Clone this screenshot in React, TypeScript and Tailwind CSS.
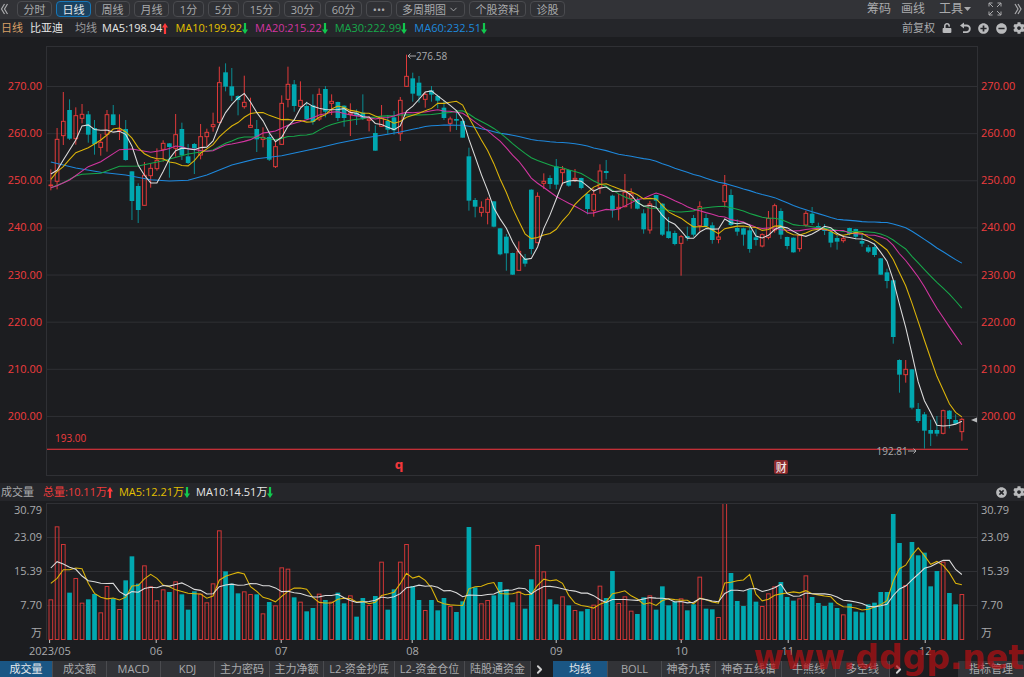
import { useState, type ReactNode } from 'react';
import { FaCog, FaMinusCircle, FaPlusCircle, FaTimesCircle, FaUnlock } from 'react-icons/fa';
import { ChevronDown, ChevronRight } from 'lucide-react';
import clsx from 'clsx';

// [high, open, close, low, volume], chart units, y grows downwards
type Bar = [number, number, number, number, number];

const bars: Bar[] = [
  // May
  [388, 437, 435, 451, 122], [264, 424, 298, 448, 341], [156, 287, 244, 315, 288], [178, 210, 296, 300, 142],
  [202, 296, 227, 314, 186], [192, 235, 223, 250, 112], [213, 223, 284, 308, 122], [240, 264, 312, 344, 138],
  [282, 322, 307, 347, 83], [210, 283, 224, 335, 162], [195, 223, 255, 256, 125], [223, 272, 270, 300, 93],
  [240, 267, 360, 362, 179], [394, 394, 483, 540, 251], [430, 438, 510, 549, 169], [366, 496, 406, 497, 224],
  [372, 407, 385, 443, 161],
  // June
  [325, 386, 361, 392, 119], [301, 328, 310, 365, 152], [309, 310, 321, 413, 144], [222, 325, 284, 350, 176],
  [248, 267, 346, 360, 137], [312, 349, 369, 372, 91], [309, 312, 325, 402, 146], [252, 345, 290, 358, 139],
  [266, 290, 277, 318, 113], [218, 260, 254, 275, 170], [80, 247, 128, 250, 329], [70, 97, 140, 154, 206],
  [84, 139, 167, 183, 169], [166, 168, 180, 226, 140], [107, 200, 187, 206, 146], [173, 262, 256, 263, 138],
  [240, 267, 298, 336, 137], [262, 298, 292, 322, 80], [280, 291, 359, 363, 114], [304, 380, 320, 384, 104],
  // July
  [166, 313, 190, 315, 218], [80, 178, 133, 202, 214], [120, 133, 198, 215, 128], [124, 199, 181, 201, 115],
  [185, 198, 237, 240, 86], [163, 196, 246, 254, 96], [145, 237, 163, 243, 139], [138, 147, 215, 232, 120],
  [163, 190, 184, 225, 115], [185, 186, 234, 243, 142], [196, 197, 234, 260, 110], [190, 223, 219, 288, 134],
  [208, 218, 228, 255, 70], [163, 218, 236, 240, 126], [228, 241, 237, 274, 105], [256, 279, 332, 332, 132],
  [195, 259, 235, 261, 235], [225, 243, 269, 283, 91], [213, 232, 271, 284, 152], [171, 281, 181, 303, 235],
  [44, 139, 109, 141, 288],
  // August
  [98, 115, 161, 185, 162], [108, 128, 167, 188, 120], [158, 178, 163, 203, 90], [138, 151, 164, 185, 120],
  [164, 168, 182, 205, 89], [183, 203, 234, 240, 126], [230, 250, 237, 275, 102], [212, 237, 242, 270, 84],
  [240, 243, 293, 293, 116], [323, 349, 482, 512, 339], [474, 480, 500, 532, 158], [484, 517, 502, 530, 110],
  [472, 517, 478, 553, 120], [484, 484, 560, 562, 134], [564, 565, 643, 646, 174], [582, 590, 640, 692, 152],
  [638, 639, 704, 705, 113], [604, 691, 634, 692, 146], [642, 655, 671, 680, 94], [448, 449, 627, 643, 182],
  [457, 608, 469, 610, 285], [400, 430, 424, 447, 206], [406, 414, 432, 447, 122],
  // September
  [357, 379, 434, 448, 107], [378, 398, 388, 436, 131], [388, 390, 437, 440, 104], [387, 420, 415, 426, 90],
  [413, 414, 444, 448, 86], [460, 462, 507, 523, 93], [446, 511, 463, 530, 106], [373, 442, 393, 461, 163],
  [360, 393, 399, 418, 126], [464, 467, 511, 533, 207], [462, 506, 502, 541, 111], [402, 500, 457, 502, 131],
  [445, 475, 460, 506, 88], [472, 480, 506, 508, 78], [508, 520, 568, 581, 128], [483, 570, 492, 581, 134],
  [464, 465, 482, 502, 91], [490, 491, 584, 588, 161], [531, 574, 594, 596, 104], [572, 579, 612, 616, 116],
  // October
  [585, 610, 590, 707, 125], [560, 588, 594, 602, 89], [525, 534, 584, 590, 107], [484, 557, 500, 573, 190],
  [522, 534, 559, 566, 94], [547, 556, 600, 611, 92], [565, 598, 591, 610, 69], [405, 485, 436, 502, 411],
  [448, 465, 555, 558, 201], [538, 564, 575, 587, 117], [563, 565, 584, 617, 102], [560, 571, 627, 638, 152],
  [568, 592, 600, 617, 115], [580, 618, 584, 622, 102], [513, 592, 535, 598, 140], [491, 570, 497, 578, 161],
  [505, 513, 584, 597, 174],
  // November
  [590, 591, 618, 628, 129], [592, 593, 637, 638, 118], [582, 626, 586, 635, 125], [512, 555, 520, 560, 194],
  [501, 521, 549, 555, 129], [548, 558, 565, 568, 111], [552, 563, 573, 585, 102], [566, 575, 608, 622, 112],
  [586, 594, 605, 629, 96], [586, 602, 596, 608, 77], [563, 564, 582, 586, 109], [566, 567, 590, 598, 85],
  [582, 603, 611, 620, 83], [615, 622, 635, 639, 107], [610, 621, 645, 651, 112], [654, 655, 704, 705, 144],
  [686, 697, 723, 745, 144], [720, 721, 891, 911, 378], [958, 960, 1004, 1058, 291], [960, 1004, 988, 1028, 165],
  [987, 988, 1103, 1108, 294], [1089, 1107, 1143, 1149, 254],
  // December
  [1116, 1123, 1172, 1226, 262], [1139, 1170, 1181, 1218, 161], [1128, 1170, 1181, 1189, 207],
  [1109, 1180, 1112, 1183, 235], [1110, 1112, 1137, 1165, 141], [1123, 1140, 1151, 1152, 107],
  [1133, 1175, 1138, 1202, 138],
];

const UNITS = 2790;
const xAt = (i: number) => 11.5 + i * 18.72;

const closes = bars.map((b) => b[2]);
const volumes = bars.map((b) => b[4]);

/** Moving average; the first bars have no full window, so `lead` gives their points. */
function average(values: number[], size: number, lead: [number, number][]) {
  const points = lead.map(([i, v]) => [xAt(i), v]);
  for (let i = size - 1; i < values.length; i++) {
    const sum = values.slice(i - size + 1, i + 1).reduce((a, b) => a + b, 0);
    points.push([xAt(i), sum / size]);
  }
  return points;
}

const toPath = (points: number[][]) => points.map((p) => p.map((n) => n.toFixed(1)).join(',')).join(' ');

const priceLines = [
  {
    color: '#1e88dc',
    points: average(closes, 60, [
      [0, 366], [4, 384], [8, 397], [12, 405], [16, 419], [19, 423], [22, 421], [25, 405], [29, 375], [33, 356],
      [37, 347], [40, 335], [43, 323], [46, 310], [50, 295], [53, 286], [56, 276], [58, 268],
    ]),
  },
  {
    color: '#17a84a',
    points: average(closes, 30, [
      [0, 443], [2, 428], [4, 408], [5, 403], [8, 400], [11, 379], [14, 378], [18, 362], [22, 342], [26, 330], [28, 310],
    ]),
  },
  {
    color: '#d235a0',
    points: average(closes, 20, [
      [0, 443], [1, 437], [3, 420], [6, 380], [8, 365], [11, 329], [13, 327], [16, 337], [18, 331],
    ]),
  },
  {
    color: '#dcb40a',
    points: average(closes, 10, [
      [0, 418], [1, 395], [2, 380], [3, 358], [4, 338], [5, 331], [6, 323], [7, 312], [8, 300],
    ]),
  },
  { color: '#dcdcdc', points: average(closes, 5, [[0, 402], [1, 391], [2, 360], [3, 330]]) },
];

const volumeLines = [
  { color: '#dcb40a', points: average(volumes, 5, [[0, 170], [1, 185], [2, 211], [3, 211]]) },
  {
    color: '#dcdcdc',
    points: average(volumes, 10, [
      [0, 216], [1, 235], [2, 228], [3, 218], [4, 212], [5, 192], [6, 178], [7, 175], [8, 170],
    ]),
  },
].map((l) => ({ ...l, points: l.points.map(([x, y]) => [x, 411 - y]) }));

const months = [
  { i: 0, label: '2023/05' },
  { i: 17, label: '06' },
  { i: 37, label: '07' },
  { i: 58, label: '08' },
  { i: 81, label: '09' },
  { i: 101, label: '10' },
  { i: 118, label: '11' },
  { i: 140, label: '12' },
];

const periods = [
  { label: '分时', width: 'w-[35px]' },
  { label: '日线', width: 'w-[35px]' },
  { label: '周线', width: 'w-[35px]' },
  { label: '月线', width: 'w-[35px]' },
  { label: '1分', width: 'w-[31px]' },
  { label: '5分', width: 'w-[31px]' },
  { label: '15分', width: 'w-[37px]' },
  { label: '30分', width: 'w-[37px]' },
  { label: '60分', width: 'w-[37px]' },
  { label: '•••', width: 'w-[26px]' },
  { label: '多周期图', width: 'w-[69px]', menu: true },
  { label: '个股资料', width: 'w-[57px]' },
  { label: '诊股', width: 'w-[35px]' },
];

const indicators = [
  { label: '成交量', width: 'w-[53px]' },
  { label: '成交额', width: 'w-[54px]' },
  { label: 'MACD', width: 'w-[54px]' },
  { label: 'KDJ', width: 'w-[54px]' },
  { label: '主力密码', width: 'w-[55px]' },
  { label: '主力净额', width: 'w-[54px]' },
  { label: 'L2-资金抄底', width: 'w-[71px]' },
  { label: 'L2-资金仓位', width: 'w-[70px]' },
  { label: '陆股通资金', width: 'w-[66px]' },
];

const overlays = [
  { label: '均线', width: 'w-[55px]' },
  { label: 'BOLL', width: 'w-[54px]' },
  { label: '神奇九转', width: 'w-[54px]' },
  { label: '神奇五线谱', width: 'w-[66px]' },
  { label: '牛熊线', width: 'w-[54px]' },
  { label: '多空线', width: 'w-[54px]' },
];

const prices = ['270.00', '260.00', '250.00', '240.00', '230.00', '220.00', '210.00', '200.00'];

function Arrow({ up }: { up?: boolean }) {
  return (
    <svg viewBox="0 0 6 11" className={clsx('h-[11px] w-[6px]', up ? 'text-[#ff3b3b]' : 'rotate-180 text-[#12c84e]')}>
      <path d="M3 0 6 4.5H4.1V11H1.9V4.5H0Z" fill="currentColor" />
    </svg>
  );
}

function Reading({ text, color, up }: { text: string; color: string; up?: boolean }) {
  return (
    <span className={clsx('flex items-center', color)}>
      {text}
      <Arrow up={up} />
    </span>
  );
}

function IconButton({ label, children }: { label: string; children: ReactNode }) {
  return (
    <button type="button" aria-label={label} className="flex size-3 shrink-0 items-center justify-center text-[#b9babc]">
      {children}
    </button>
  );
}

function Toolbar() {
  const [active, setActive] = useState('日线');

  return (
    <header className="flex h-[19px] items-center bg-[#323337] pb-px text-[#a9aaac]">
      <button type="button" aria-label="向左" className="w-[17px] shrink-0">
        <svg viewBox="0 0 17 14" className="h-[14px] w-[17px]" fill="none" stroke="currentColor" strokeWidth="1.2">
          <path d="M4.5 2 1.5 7l3 5M7.500 2 4.500 7l3 5" />
        </svg>
      </button>
      <nav className="flex gap-1">
        {periods.map((p) => (
          <button
            key={p.label}
            type="button"
            onClick={() => setActive(p.label)}
            className={clsx(
              'flex h-4 shrink-0 items-center justify-center gap-[2px] rounded-sm border leading-none whitespace-nowrap',
              p.width,
              active === p.label
                ? 'border-[#1777b8] bg-[#1b4260] text-[#e4e8ec]'
                : 'border-[#4a4b4f] bg-[#303135]',
            )}
          >
            {p.label}
            {p.menu && <ChevronDown size={11} />}
          </button>
        ))}
      </nav>
      <div className="-mr-px ml-auto flex shrink-0 items-center text-[12px]">
        <button type="button">筹码</button>
        <button type="button" className="ml-[10px]">画线</button>
        <button type="button" className="ml-[14px] flex items-center gap-px">
          工具
          <svg viewBox="0 0 7 4" className="h-1 w-[7px]">
            <path d="M0 0h7L3.500 4Z" fill="currentColor" />
          </svg>
        </button>
        <button type="button" aria-label="全屏" className="ml-[17px]">
          <svg viewBox="0 0 14 14" className="size-[14px]" fill="none" stroke="currentColor">
            <path d="M1 4.500V1h3.500M1 1l4 4M9.500 1H13v3.500M13 1 9 5M1 9.500V13h3.500M1 13l4-4M13 9.500V13H9.500M13 13 9 9" />
          </svg>
        </button>
        <button type="button" aria-label="向右" className="ml-[9px]">
          <svg viewBox="0 0 14 14" className="size-[14px]" fill="none" stroke="currentColor" strokeWidth="1.2">
            <path d="m4 2 3 5-3 5M7 2l3 5-3 5" />
          </svg>
        </button>
      </div>
    </header>
  );
}

function AverageBar() {
  return (
    <div className="flex h-[18px] items-center overflow-hidden bg-[#25262a] pl-px">
      <span className="text-[#d9a066]">日线</span>
      <span className="ml-[7px] text-[#e6e6e6]">比亚迪</span>
      <span className="ml-3 text-[#9b9c9e]">均线</span>
      <div className="ml-[5px] flex gap-[7px]">
        <Reading text="MA5:198.94" color="text-[#e6e6e6]" up />
        <Reading text="MA10:199.92" color="text-[#e3c000]" />
        <Reading text="MA20:215.22" color="text-[#d235a0]" />
        <Reading text="MA30:222.99" color="text-[#17a84a]" />
        <Reading text="MA60:232.51" color="text-[#1e88dc]" />
      </div>
      <div className="-mr-px ml-auto flex shrink-0 items-center gap-[6px] text-[#a9aaac]">
        <span>前复权</span>
        <IconButton label="锁定"><FaUnlock size={10} /></IconButton>
        <IconButton label="撤销">
          <svg viewBox="0 0 12 12" className="size-3" fill="none" stroke="currentColor" strokeWidth="1.800">
            <path d="M3 3.500h4.500a3.200 3.200 0 0 1 0 6.700H4" />
            <path d="M5 .5V6.500L1 3.500Z" fill="currentColor" stroke="none" />
          </svg>
        </IconButton>
        <IconButton label="放大"><FaPlusCircle size={11} /></IconButton>
        <IconButton label="缩小"><FaMinusCircle size={11} /></IconButton>
        <IconButton label="设置"><FaCog size={12} /></IconButton>
      </div>
    </div>
  );
}

function PriceAxis({ side }: { side: 'left' | 'right' }) {
  return (
    <div
      className={clsx(
        'flex h-[394px] w-[46px] shrink-0 flex-col justify-around pt-4 text-[#f03c3e]',
        side === 'left' ? 'pr-1 text-right' : 'pl-[3px]',
      )}
    >
      {prices.map((p) => (
        <span key={p} className="leading-4">{p}</span>
      ))}
    </div>
  );
}

function PriceChart() {
  return (
    <section className="flex pt-[9px]">
      <PriceAxis side="left" />
      <div className="relative h-[430px] min-w-0 flex-1 border border-[#2f3034]">
        <svg viewBox={`0 21 ${UNITS} 1284`} preserveAspectRatio="none" className="size-full">
          {prices.map((p, i) => (
            <rect key={p} x="0" y={138 + i * 141.4} width={UNITS} height="3" fill="#2f3034" />
          ))}
          {bars.map(([high, open, close, low], i) => {
            const up = close < open;
            const x = xAt(i);
            if (!up) {
              return (
                <g key={i}>
                  <rect x={x - 1.5} y={high} width="3" height={low - high} fill="#0a8c92" />
                  <rect x={x - 7} y={open} width="14" height={close - open} fill="#00a8b0" />
                </g>
              );
            }
            return (
              <g key={i} fill="#e03a3a">
                <rect x={x - 1.5} y={high} width="3" height={Math.max(close - high, 0)} />
                <rect x={x - 1.5} y={open} width="3" height={Math.max(low - open, 0)} />
                <rect
                  x={x - 5.5}
                  y={close}
                  width="11"
                  height={Math.max(open - close, 1)}
                  fill="none"
                  stroke="#e03a3a"
                  strokeWidth="3"
                />
              </g>
            );
          })}
          {priceLines.map((l) => (
            <polyline key={l.color} points={toPath(l.points)} fill="none" stroke={l.color} strokeWidth="3.200" />
          ))}
          <rect x="0" y="1226" width="2763" height="4" fill="#c22f36" />
        </svg>

        <span className="absolute top-px left-[38.700%] flex items-center text-[10px] leading-4 text-[#a9aaac]">
          <svg viewBox="0 0 9 6" className="h-[6px] w-[9px]" fill="none" stroke="currentColor">
            <path d="M9 3H1M3.500.5 1 3l2.500 2.500" />
          </svg>
          276.58
        </span>
        <span className="absolute top-[396px] left-[89.200%] flex items-center text-[10px] leading-4 text-[#a9aaac]">
          192.81
          <svg viewBox="0 0 9 6" className="h-[6px] w-[9px]" fill="none" stroke="currentColor">
            <path d="M0 3h8M5.500.5 8 3 5.500 5.500" />
          </svg>
        </span>
        <span className="absolute top-[383px] left-2 text-[10px] leading-4 text-[#f03c3e]">193.00</span>
        <span className="absolute top-[410px] left-[37.400%] font-['DejaVu_Sans'] text-[12px] leading-4 font-bold text-[#f0383c]">q</span>
        <span className="absolute top-[413px] left-[78.200%] flex size-[14px] items-center justify-center rounded-xs bg-[#8a2a2c] text-[11px] leading-none font-medium text-[#f0e4e4]">
          财
        </span>
        <svg viewBox="0 0 6 6" className="absolute top-[370px] right-0 size-[6px]">
          <path d="M0 3 6 .5v5Z" fill="#b9babc" />
        </svg>
      </div>
      <PriceAxis side="right" />
    </section>
  );
}

function VolumeAxis({ side }: { side: 'left' | 'right' }) {
  return (
    <div
      className={clsx(
        '-mt-px flex h-[137px] w-[46px] shrink-0 flex-col leading-4 text-[#a9aaac]',
        side === 'left' ? 'pr-1 text-right' : 'pl-[3px]',
      )}
    >
      <span>30.79</span>
      <span className="mt-[11px]">23.09</span>
      <span className="mt-[18px]">15.39</span>
      <span className="mt-[18px]">7.70</span>
      <span className="mt-[12px]">万</span>
    </div>
  );
}

function VolumeChart() {
  return (
    <section className="mt-[7px]">
      <div className="flex h-[18px] items-center bg-[#25262a] pl-px">
        <span className="text-[#a9aaac]">成交量</span>
        <div className="ml-[9px] flex gap-[6px]">
          <Reading text="总量:10.11万" color="text-[#f03c3c]" up />
          <Reading text="MA5:12.21万" color="text-[#e3c000]" />
          <Reading text="MA10:14.51万" color="text-[#e6e6e6]" />
        </div>
        <div className="-mr-px ml-auto flex gap-[6px]">
          <IconButton label="关闭"><FaTimesCircle size={11} /></IconButton>
          <IconButton label="设置"><FaCog size={12} /></IconButton>
        </div>
      </div>
      <div className="flex pt-[2px]">
        <VolumeAxis side="left" />
        <div className="min-w-0 flex-1">
          <svg
            viewBox={`0 3 ${UNITS} 408`}
            preserveAspectRatio="none"
            className="h-[137px] w-full border border-b-0 border-[#2f3034]"
          >
            {[102, 204, 306].map((y) => (
              <rect key={y} x="0" y={y} width={UNITS} height="3" fill="#2f3034" />
            ))}
            {bars.map(([, open, close, , vol], i) =>
              close < open ? (
                <rect
                  key={i}
                  x={xAt(i) - 5.5}
                  y={412.5 - vol}
                  width="11"
                  height={vol - 3}
                  fill="none"
                  stroke="#cf3636"
                  strokeWidth="3"
                />
              ) : (
                <rect key={i} x={xAt(i) - 7} y={411 - vol} width="14" height={vol} fill="#00a8b0" />
              ),
            )}
            {volumeLines.map((l) => (
              <polyline key={l.color} points={toPath(l.points)} fill="none" stroke={l.color} strokeWidth="3.200" />
            ))}
          </svg>
          <div className="relative h-[21px] text-[#a9aaac]">
            {months.map((m) => (
              <span
                key={m.label}
                className="absolute top-0 flex -translate-x-1/2 flex-col items-center leading-4"
                style={{ left: `${(xAt(m.i) / UNITS) * 100}%` }}
              >
                <i className="h-[3px] w-px bg-[#c8c8c8]" />
                {m.label}
              </span>
            ))}
          </div>
        </div>
        <VolumeAxis side="right" />
      </div>
    </section>
  );
}

function Tabs({ items, initial }: { items: { label: string; width: string }[]; initial: string }) {
  const [active, setActive] = useState(initial);
  return (
    <div className="flex shrink-0">
      {items.map((t) => (
        <button
          key={t.label}
          type="button"
          onClick={() => setActive(t.label)}
          className={clsx(
            'h-4 border-r border-[#4a4b4f] leading-4 whitespace-nowrap',
            t.width,
            active === t.label ? 'bg-[#1a5684] text-[#e4e8ec]' : 'bg-[#323337]',
          )}
        >
          {t.label}
        </button>
      ))}
      <button type="button" aria-label="更多" className="flex w-4 items-center justify-center text-[#d0d0d0]">
        <ChevronRight size={13} strokeWidth={3.5} />
      </button>
    </div>
  );
}

export default function App() {
  return (
    <main className="relative flex min-h-screen flex-col overflow-hidden bg-[#1c1d20] font-['Open_Sans','Noto_Sans_CJK_SC',sans-serif] text-[11px]">
      <Toolbar />
      <AverageBar />
      <PriceChart />
      <VolumeChart />
      <footer className="flex h-4 text-[#a9aaac]">
        <Tabs items={indicators} initial="成交量" />
        <div className="ml-[6px]">
          <Tabs items={overlays} initial="均线" />
        </div>
        <button type="button" className="ml-auto w-[66px] shrink-0 bg-[#323337] leading-4">指标管理</button>
      </footer>
      <span className="pointer-events-none absolute right-0 bottom-0 font-['DejaVu_Sans'] text-[33px] leading-[38px] font-bold text-[#b90f12]/70">
        www.ddgp.net
      </span>
    </main>
  );
}
